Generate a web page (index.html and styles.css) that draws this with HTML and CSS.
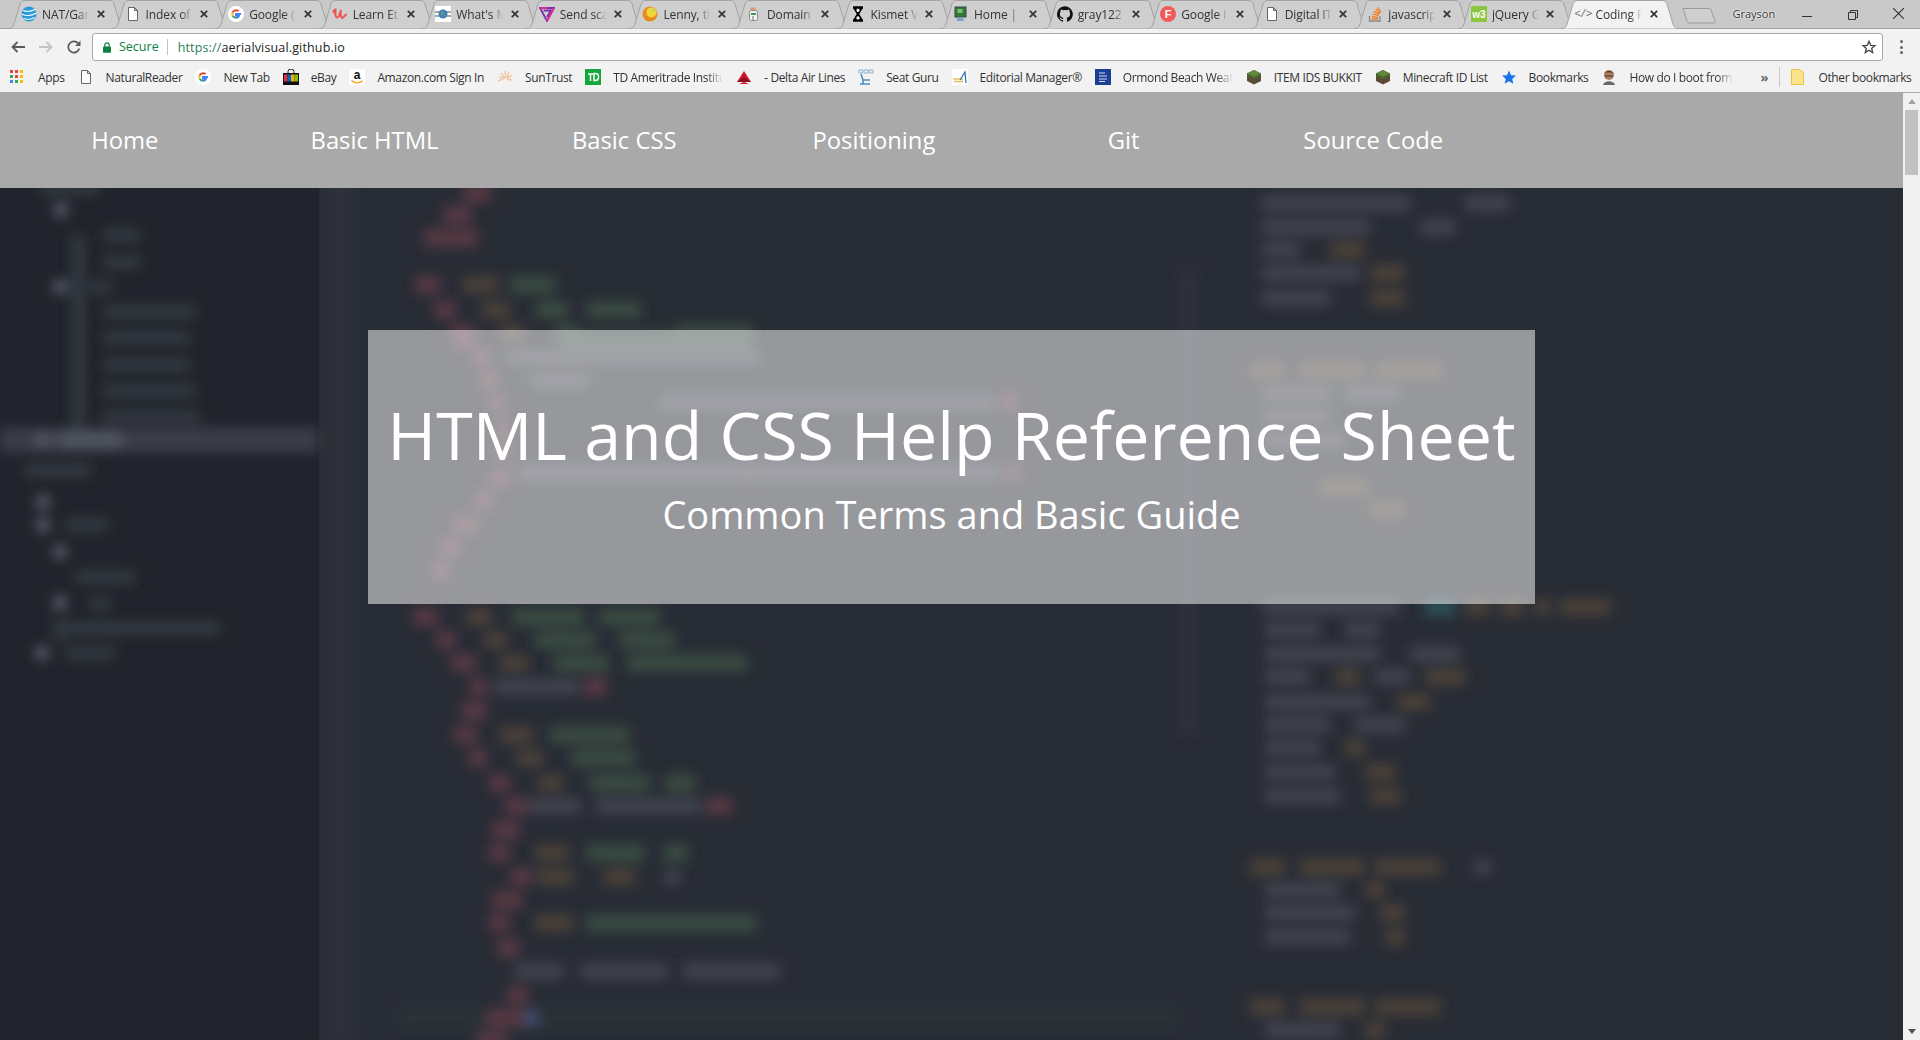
FILE: index.html
```html
<!DOCTYPE html>
<html lang="en">
<head>
<meta charset="utf-8">
<title>Coding Reference</title>
<link rel="stylesheet" href="styles.css">
</head>
<body>
<svg class="defs" width="0" height="0" aria-hidden="true">
  <defs>
    <symbol id="shape" viewBox="0 0 118 29"><path d="M0 28.5C4 28.5 5 27 6 24L12 4C13 1.5 14 .5 17 .5H101C104 .5 105 1.5 106 4L112 24C113 27 114 28.5 118 28.5"/></symbol>
    <symbol id="page" viewBox="0 0 16 16"><path d="M3.5 1.5H9.5L12.5 4.5V14.5H3.5Z M9.5 1.5V4.5H12.5" fill="#fff" stroke="#666" stroke-width="1"/></symbol>
    <symbol id="gee" viewBox="0 0 16 16"><circle cx="8" cy="8" r="8" fill="#fff"/><path d="M13 8H8V9.6H11C10.6 11 9.5 11.8 8 11.8" fill="none" stroke="#4285f4" stroke-width="2"/><path d="M8 11.8C6.5 11.8 5.2 11 4.6 9.7" fill="none" stroke="#34a853" stroke-width="2"/><path d="M4.6 9.7C4.2 8.7 4.2 7.4 4.6 6.3" fill="none" stroke="#fbbc05" stroke-width="2"/><path d="M4.6 6.3C5.2 5 6.5 4.2 8 4.2C9 4.2 9.9 4.5 10.6 5.1" fill="none" stroke="#ea4335" stroke-width="2"/></symbol>
    <symbol id="cube" viewBox="0 0 16 16"><path d="M8 1L15 4.5V12L8 15.5L1 12V4.5Z" fill="#5b4a35"/><path d="M8 1L15 4.5L8 8L1 4.5Z" fill="#5d8a3a"/><path d="M1 4.5L8 8V10L1 6.8Z M15 4.5L8 8V10L15 6.8Z" fill="#466b2c"/></symbol>
    <symbol id="x" viewBox="0 0 8 8"><path d="M.8.8L7.2 7.2M7.2.8L.8 7.2" stroke="#333" stroke-width="1.7" fill="none"/></symbol>
  </defs>
</svg>

<header class="chrome">
  <div class="tabstrip">
    <div class="tab"><svg class="shape"><use href="#shape"/></svg><svg class="ico" viewBox="0 0 16 16"><circle cx="8" cy="8" r="7.5" fill="#2a9bd6"/><path d="M2 4.6C6 6 10 5.6 14 3.6M.8 8.2C5 10 11 9.6 15.4 7M2.4 12.6C6 13.8 10 13.4 13.8 11.4" stroke="#fff" stroke-width="1.1" fill="none"/></svg><span class="ttl">NAT/Gar</span><svg class="cls"><use href="#x"/></svg></div>
    <div class="tab"><svg class="shape"><use href="#shape"/></svg><svg class="ico"><use href="#page"/></svg><span class="ttl">Index of</span><svg class="cls"><use href="#x"/></svg></div>
    <div class="tab"><svg class="shape"><use href="#shape"/></svg><svg class="ico"><use href="#gee"/></svg><span class="ttl">Google (</span><svg class="cls"><use href="#x"/></svg></div>
    <div class="tab"><svg class="shape"><use href="#shape"/></svg><svg class="ico" viewBox="0 0 16 16"><path d="M1 6C2 3 4 3 3.5 7C3 11 5 13 7 10L9 4C8 9 9 13 11 11.5L14.5 8M4 2.5L2 7.5" stroke="#ec5252" stroke-width="1.9" fill="none"/></svg><span class="ttl">Learn Et</span><svg class="cls"><use href="#x"/></svg></div>
    <div class="tab"><svg class="shape"><use href="#shape"/></svg><svg class="ico" viewBox="0 0 16 16"><rect width="16" height="16" fill="#fff"/><path d="M0 6H16M0 10H16" stroke="#9aa" stroke-width="2"/><circle cx="8" cy="8" r="4.5" fill="#3f7fbf"/><path d="M6 5.5L9 6L8 9L6 8.5ZM9 9L11 9L9.500 11.5Z" fill="#6aa84f"/></svg><span class="ttl">What's M</span><svg class="cls"><use href="#x"/></svg></div>
    <div class="tab"><svg class="shape"><use href="#shape"/></svg><svg class="ico" viewBox="0 0 16 16"><path d="M1 2H15L8 15ZM4.500 4.500H12L8 11" fill="none" stroke="#7a2bb0" stroke-width="1.8"/><path d="M1 2H8" stroke="#e0338c" stroke-width="1.8"/><path d="M15 2L8 15" stroke="#e0338c" stroke-width="1.8"/></svg><span class="ttl">Send sca</span><svg class="cls"><use href="#x"/></svg></div>
    <div class="tab"><svg class="shape"><use href="#shape"/></svg><svg class="ico" viewBox="0 0 16 16"><circle cx="8" cy="8" r="7.5" fill="#e58b1d"/><circle cx="9.400" cy="6.400" r="5" fill="#f6d53a"/><circle cx="11" cy="4.600" r="1.800" fill="#b6d96a"/></svg><span class="ttl">Lenny, th</span><svg class="cls"><use href="#x"/></svg></div>
    <div class="tab"><svg class="shape"><use href="#shape"/></svg><svg class="ico" viewBox="0 0 16 16"><path d="M4 1.500H10L9 4.500H5Z" fill="#d99a6c"/><rect x="3.500" y="4.500" width="8" height="10" rx="2" fill="#f2f2f2" stroke="#8a8a8a"/><path d="M5 8H10" stroke="#3a9a5a" stroke-width="2"/><path d="M7 10V14" stroke="#999" stroke-width="1.500"/></svg><span class="ttl">Domain</span><svg class="cls"><use href="#x"/></svg></div>
    <div class="tab"><svg class="shape"><use href="#shape"/></svg><svg class="ico" viewBox="0 0 16 16"><path d="M3 1.500H13M3 14.500H13M4.500 2L11.500 14M11.500 2L4.500 14" stroke="#000" stroke-width="2.400" fill="none"/><circle cx="8" cy="4.500" r="1.500" fill="#fff"/><circle cx="8" cy="11.800" r="1.600" fill="#fff"/></svg><span class="ttl">Kismet V</span><svg class="cls"><use href="#x"/></svg></div>
    <div class="tab"><svg class="shape"><use href="#shape"/></svg><svg class="ico" viewBox="0 0 16 16"><rect x="2" y="1" width="11" height="10" fill="#2f7a3a" stroke="#3a4a3a"/><rect x="4.500" y="3" width="5" height="4" fill="#7fbf6a"/><path d="M5 11L3.500 15H11L10 11" fill="#7fa0c0"/></svg><span class="ttl">Home | I</span><svg class="cls"><use href="#x"/></svg></div>
    <div class="tab"><svg class="shape"><use href="#shape"/></svg><svg class="ico" viewBox="0 0 16 16"><path fill="#111" d="M8 .2a8 8 0 0 0-2.500 15.600c.4.1.5-.2.5-.4v-1.400c-2.200.5-2.700-1-2.700-1-.4-.9-.9-1.200-.9-1.200-.7-.5.1-.5.1-.5.8.1 1.200.8 1.200.8.7 1.200 1.900.9 2.300.7.1-.5.3-.9.5-1.100-1.800-.2-3.600-.9-3.600-4 0-.9.3-1.600.8-2.100-.1-.2-.4-1 .1-2.100 0 0 .7-.2 2.200.8a7.600 7.600 0 0 1 4 0c1.500-1 2.200-.8 2.200-.8.4 1.100.2 1.900.1 2.100.5.6.8 1.300.8 2.100 0 3.100-1.900 3.700-3.700 3.900.3.300.6.800.6 1.500v2.200c0 .2.100.5.600.4A8 8 0 0 0 8 .2z"/></svg><span class="ttl">gray122</span><svg class="cls"><use href="#x"/></svg></div>
    <div class="tab"><svg class="shape"><use href="#shape"/></svg><svg class="ico" viewBox="0 0 16 16"><circle cx="8" cy="8" r="8" fill="#f25a5a"/><text x="8" y="12" class="ico-f">F</text></svg><span class="ttl">Google I</span><svg class="cls"><use href="#x"/></svg></div>
    <div class="tab"><svg class="shape"><use href="#shape"/></svg><svg class="ico"><use href="#page"/></svg><span class="ttl">Digital IT</span><svg class="cls"><use href="#x"/></svg></div>
    <div class="tab"><svg class="shape"><use href="#shape"/></svg><svg class="ico" viewBox="0 0 16 16"><path d="M2.500 10V15H13V10" fill="none" stroke="#8a8a8a" stroke-width="1.300"/><path d="M4.500 12.800H11M4.700 10.400L11 11.400M5.500 7.800L11.400 9.600M7 5.300L12.200 8.400M9 3L13 7.600M11 1.300L13.800 6.500" stroke="#f48024" stroke-width="1.400" fill="none"/></svg><span class="ttl">javascrip</span><svg class="cls"><use href="#x"/></svg></div>
    <div class="tab"><svg class="shape"><use href="#shape"/></svg><svg class="ico" viewBox="0 0 16 16"><rect width="16" height="16" fill="#8cc63f"/><text x="8" y="12" class="ico-w3">w3</text></svg><span class="ttl">jQuery G</span><svg class="cls"><use href="#x"/></svg></div>
    <div class="tab active"><svg class="shape"><use href="#shape"/></svg><span class="ico code">&lt;/&gt;</span><span class="ttl">Coding R</span><svg class="cls"><use href="#x"/></svg></div>
    <svg class="newtab" viewBox="0 0 34 17"><path d="M1 1.500H27C28 1.500 28.500 2 29 3L33 14C33.300 15.300 33 16 31.500 16H7C6 16 5.500 15.500 5 14.500Z" fill="#cfcfcf" stroke="#9a9a9a"/></svg>
    <div class="winctl">
      <span class="user">Grayson</span>
      <svg class="minbtn" viewBox="0 0 10 10"><path d="M0 5.500H10" stroke="#333"/></svg>
      <svg class="maxbtn" viewBox="0 0 10 10"><path d="M.5 2.500H7.500V9.500H.5ZM2.500 2.500V.5H9.500V7.500H7.500" fill="none" stroke="#333"/></svg>
      <svg class="closebtn" viewBox="0 0 10 10"><path d="M0 0L10 10M10 0L0 10" stroke="#333"/></svg>
    </div>
  </div>

  <div class="toolbar">
    <svg class="tool" viewBox="0 0 14 12"><path d="M14 6H2M6.500 1L1.500 6L6.500 11" fill="none" stroke="#5a5a5a" stroke-width="1.800"/></svg>
    <svg class="tool" viewBox="0 0 14 12"><path d="M0 6H12M7.500 1L12.500 6L7.500 11" fill="none" stroke="#c4c4c4" stroke-width="1.800"/></svg>
    <svg class="tool" viewBox="0 0 14 14"><path d="M12.300 8.500A5.600 5.600 0 1 1 11 3.200" fill="none" stroke="#5a5a5a" stroke-width="1.700"/><path d="M13.500 .5V6H8Z" fill="#5a5a5a"/></svg>
    <div class="omnibox">
      <svg class="lock" viewBox="0 0 9 12"><rect y="5" width="9" height="7" rx="1" fill="#0b8043"/><path d="M2 5.500V3.300A2.500 2.500 0 0 1 7 3.300V5.500" fill="none" stroke="#0b8043" stroke-width="1.300"/></svg>
      <span class="secure">Secure</span>
      <span class="url"><span class="scheme">https://</span>aerialvisual.github.io</span>
      <svg class="star" viewBox="0 0 14 14"><path d="M7 1.300L8.700 5.300L13 5.600L9.700 8.400L10.700 12.600L7 10.300L3.300 12.600L4.300 8.400L1 5.600L5.300 5.300Z" fill="none" stroke="#444" stroke-width="1.300"/></svg>
    </div>
    <div class="dots"><i></i><i></i><i></i></div>
  </div>

  <nav class="bookmarks">
    <a class="bm"><svg class="bi apps" viewBox="0 0 14 14"><path fill="#ea4335" d="M0 0h3v3H0z"/><path fill="#ea4335" d="M5 0h3v3H5z"/><path fill="#fbbc05" d="M10 0h3v3h-3z"/><path fill="#34a853" d="M0 5h3v3H0z"/><path fill="#ea4335" d="M5 5h3v3H5z"/><path fill="#fbbc05" d="M10 5h3v3h-3z"/><path fill="#4285f4" d="M0 10h3v3H0z"/><path fill="#34a853" d="M5 10h3v3H5z"/><path fill="#fbbc05" d="M10 10h3v3h-3z"/></svg><span>Apps</span></a>
    <a class="bm"><svg class="bi"><use href="#page"/></svg><span>NaturalReader</span></a>
    <a class="bm"><svg class="bi"><use href="#gee"/></svg><span>New Tab</span></a>
    <a class="bm"><svg class="bi" viewBox="0 0 16 16"><path d="M5 4V2.500A3 2.500 0 0 1 11 2.500V4" fill="none" stroke="#222"/><rect y="4" width="16" height="12" fill="#111"/><rect x="1" y="5.500" width="3.500" height="7" fill="#e53238"/><rect x="4.500" y="5.500" width="3.500" height="7" fill="#0064d2"/><rect x="8" y="5.500" width="3.500" height="7" fill="#f5af02"/><rect x="11.500" y="5.500" width="3.500" height="7" fill="#86b817"/></svg><span>eBay</span></a>
    <a class="bm"><svg class="bi" viewBox="0 0 16 16"><rect width="16" height="16" fill="#fff"/><text x="8" y="10" class="ico-a">a</text><path d="M2.500 11.500C6 14.500 10 14.500 13.500 11.800" fill="none" stroke="#f90" stroke-width="1.400"/></svg><span>Amazon.com Sign In</span></a>
    <a class="bm"><svg class="bi" viewBox="0 0 16 16"><path d="M1 12L8 9M2 8L8 9M4 4L8 9M8 2L9 9M12 3L10 9M15 6L10 10M15 11L10 10" stroke="#f2c9a8" stroke-width="1.500"/></svg><span>SunTrust</span></a>
    <a class="bm"><svg class="bi" viewBox="0 0 16 16"><rect width="16" height="16" fill="#14a83b"/><path d="M3 5H8M5.500 5V12M9 4.500V11.500H10.500A3 3.500 0 0 0 10.500 4.500Z" fill="none" stroke="#fff" stroke-width="1.500"/></svg><span class="fade">TD Ameritrade Institu</span></a>
    <a class="bm"><svg class="bi" viewBox="0 0 16 16"><path d="M8 2L15 13H1Z" fill="#d2132c"/><path d="M8 8L15 13H1Z" fill="#8f0f20"/><path d="M8 13L3 15H13Z" fill="#d2132c"/></svg><span>- Delta Air Lines</span></a>
    <a class="bm"><svg class="bi" viewBox="0 0 16 16"><path d="M1 1H5V4H1ZM6 1H10V4H6ZM11 1H15V4H11Z" fill="none" stroke="#8fb3d0"/><path d="M3 5L5 11H12M5 11V15M2 15H12" fill="none" stroke="#4d8fc4" stroke-width="1.600"/></svg><span>Seat Guru</span></a>
    <a class="bm"><svg class="bi" viewBox="0 0 16 16"><rect width="16" height="16" fill="#fff"/><path d="M1 10H11M2 12.500H11" stroke="#e4c25a" stroke-width="1.300"/><path d="M8 11L13 3L14 14" fill="none" stroke="#3577b4" stroke-width="1.300"/></svg><span>Editorial Manager®</span></a>
    <a class="bm"><svg class="bi" viewBox="0 0 16 16"><rect width="16" height="16" fill="#1c3f94"/><path d="M4 4H10M4 7H12M4 10H12M4 12.500H10" stroke="#d6def2"/></svg><span class="fade">Ormond Beach Weat</span></a>
    <a class="bm"><svg class="bi"><use href="#cube"/></svg><span>ITEM IDS BUKKIT</span></a>
    <a class="bm"><svg class="bi"><use href="#cube"/></svg><span>Minecraft ID List</span></a>
    <a class="bm"><svg class="bi" viewBox="0 0 16 16"><path d="M8 1.500L10 6.200L15 6.600L11.200 9.900L12.400 14.800L8 12.200L3.600 14.800L4.800 9.900L1 6.600L6 6.200Z" fill="#1a73e8"/></svg><span>Bookmarks</span></a>
    <a class="bm"><svg class="bi" viewBox="0 0 16 16"><circle cx="8" cy="6" r="5" fill="#b08060"/><path d="M3 5C4 1 12 1 13 5L11 3.500H5Z" fill="#5a4030"/><path d="M4 7H12" stroke="#333"/><path d="M2 16C3 11 13 11 14 16Z" fill="#6a6a6a"/></svg><span class="fade short">How do I boot from</span></a>
    <span class="more">»</span>
    <i class="bm-sep"></i>
    <a class="bm last"><svg class="bi folder" viewBox="0 0 13 16"><path d="M.5 .5H8.500L12.500 3.500V15.500H.5Z" fill="#fbe38e" stroke="#e9c13c"/></svg><span>Other bookmarks</span></a>
  </nav>
</header>

<div class="viewport">
  <main class="page">
    <nav class="sitenav">
      <a>Home</a><a>Basic HTML</a><a>Basic CSS</a><a>Positioning</a><a>Git</a><a>Source Code</a>
    </nav>
    <section class="hero">
      <svg class="codebg" viewBox="0 188 1903 852" aria-hidden="true">
        <defs><filter id="blur" x="-5%" y="-5%" width="110%" height="110%"><feGaussianBlur stdDeviation="6"/></filter></defs>
        <rect x="0" y="188" width="1903" height="852" fill="#282c35"/>
        <rect x="0" y="188" width="319" height="852" fill="#21242c"/>
        <g filter="url(#blur)" fill="none">
          <path d="M340 170V1040" stroke="#2e323a" stroke-width="24"/>
          <path d="M1188 270V735" stroke="#2f333c" stroke-width="14"/>
          <path d="M400 1018H1175" stroke="#2c3039" stroke-width="22"/>
          <path d="M0 440H318" stroke="#3a3e48" stroke-width="24"/>
          <g stroke="#333741" stroke-width="14">
            <path d="M40 188H100M103 235H140M103 262H140M90 287H112M103 312H195M103 338H190M103 365H190M103 391H195M103 417H200M78 235V430M25 470H90M65 525H108M75 577H135M90 603H110M60 628H220M65 653H115M60 620V640"/>
          </g>
          <g stroke="#50545f" stroke-width="16" stroke-linecap="round">
            <path d="M61 210h.1M60 287h.1M42 440h.1M65 440H115M43 502h.1M43 525h.1M60 552h.1M60 603h.1M42 653h.1"/>
          </g>
          <g stroke="#553743" stroke-width="18">
            <path d="M463 193H491M443 215H472M424 238H478M415 285H440M434 310H456M450 333H475M457 340H472M472 357H490M480 380H498M490 404H505M495 430H510M495 452H510M490 478H510M475 500H492M454 525H478M440 547H460M431 570H450M413 617H438M436 640H456M451 663H476M469 687H487M584 687H607M461 711H487M454 735H477M469 758H487M489 783H510M505 806H528M706 806H732M492 830H520M489 853H510M510 877H533M492 900H522M489 923H510M497 948H520M507 995H528M487 1018H525M477 1040H507M1002 402H1018M1006 473H1020M741 473H756"/>
          </g>
          <g stroke="#4a4139" stroke-width="17">
            <path d="M463 285H498M482 310H510M500 333H525M466 617H492M484 640H507M500 663H528M500 735H533M517 758H543M538 783H563M535 853H568M538 877H573M604 877H635M535 923H573M1250 370H1285M1300 370H1365M1375 370H1443M1320 487H1370M1370 510H1405M1330 250H1365M1370 273H1405M1370 298H1405M1465 607H1490M1500 607H1525M1535 607H1550M1560 607H1610M1335 677H1360M1425 677H1465M1398 702H1430M1345 748H1365M1365 772H1395M1370 796H1400M1250 867H1285M1300 867H1365M1375 867H1440M1365 890H1385M1380 913H1405M1385 937H1405M1250 1007H1285M1300 1007H1365M1375 1007H1440M1365 1030H1385"/>
          </g>
          <g stroke="#394a40" stroke-width="18">
            <path d="M510 285H555M536 310H568M587 310H641M555 333H580M676 333H753M562 340H750M512 617H584M599 617H660M535 640H596M619 640H675M553 663H609M627 663H747M550 735H630M571 758H635M589 783H650M665 783H696M586 853H645M663 853H688M586 923H757"/>
          </g>
          <g stroke="#3f434d" stroke-width="16">
            <path d="M505 357H760M660 402H995M517 473H1000M530 380H590M494 687H579M530 806H581M596 806H701M665 877H680M515 971H563M581 971H668M683 971H780M1262 203H1410M1465 203H1510M1262 227H1370M1420 227H1455M1262 250H1300M1262 273H1360M1262 298H1330M1262 393H1330M1345 393H1400M1262 416H1330M1262 440H1345M1262 607H1400M1265 630H1320M1345 630H1380M1265 654H1380M1410 654H1460M1265 677H1310M1375 677H1410M1265 702H1370M1265 725H1330M1355 725H1405M1265 748H1320M1265 772H1335M1265 796H1340M1265 890H1340M1265 913H1355M1265 937H1350M1265 1030H1340M1475 867H1490"/>
          </g>
          <path d="M1425 607H1455" stroke="#2c5058" stroke-width="18"/>
          <path d="M525 1018H538" stroke="#3d4c6a" stroke-width="17"/>
          <path d="M1243 505H1243.100M1243 925H1243.100M1243 1085H1243.100" stroke="#363a42" stroke-width="14"/>
        </g>
      </svg>
      <div class="banner">
        <h1>HTML and CSS Help Reference Sheet</h1>
        <h2>Common Terms and Basic Guide</h2>
      </div>
    </section>
  </main>
  <aside class="scrollbar">
    <svg class="arrow" viewBox="0 0 8 5"><path d="M4 0L8 5H0Z"/></svg>
    <div class="thumb"></div>
    <svg class="arrow down" viewBox="0 0 8 5"><path d="M0 0H8L4 5Z"/></svg>
  </aside>
</div>
</body>
</html>
```

FILE: styles.css
```css
* { box-sizing: border-box; }
html, body { margin: 0; height: 100%; overflow: hidden; }
body {
  display: flex;
  flex-direction: column;
  font-family: "Open Sans", "Noto Sans", sans-serif;
  background: #282c35;
}
.defs { display: block; height: 0; }

/* browser chrome */
.chrome { flex: none; background: #f2f2f2; color: #333; font-size: 12px; }
.tabstrip {
  display: flex;
  height: 29px;
  padding-left: 8px;
  background: #c9c9c9;
  border-bottom: 1px solid #a3a3a3;
}
.tab {
  position: relative;
  flex: 0 0 118px;
  height: 28px;
  margin-right: -14.45px;
  display: flex;
  align-items: center;
  padding-left: 13px;
}
.shape {
  position: absolute;
  left: 0;
  top: 0;
  width: 118px;
  height: 29px;
  fill: #cfcfcf;
  stroke: #a3a3a3;
}
.tab.active { z-index: 2; }
.tab.active .shape { fill: #f2f2f2; }
.ico { position: relative; flex: none; width: 16px; height: 16px; }
.ico.code { color: #777; font-size: 11px; line-height: 16px; font-family: "Liberation Mono", monospace; letter-spacing: -1px; white-space: nowrap; }
.ico-f { font: bold 11px "Liberation Sans", sans-serif; fill: #fff; text-anchor: middle; }
.ico-w3 { font: bold 10px "Liberation Sans", sans-serif; fill: #fff; text-anchor: middle; }
.ico-a { font: bold 12px "Liberation Sans", sans-serif; fill: #111; text-anchor: middle; }
.ttl {
  position: relative;
  flex: none;
  width: 47px;
  margin-left: 5px;
  white-space: nowrap;
  letter-spacing: -.1px;
  -webkit-mask-image: linear-gradient(90deg, #000 75%, transparent 100%);
  mask-image: linear-gradient(90deg, #000 75%, transparent 100%);
}
.cls { position: relative; flex: none; width: 8px; height: 8px; margin-left: 7.5px; }
.newtab { flex: none; width: 34px; height: 17px; margin: 7px 0 0 16.5px; }
.winctl { display: flex; flex: 1; align-items: flex-start; padding-top: 8px; }
.user {
  margin-left: 17px;
  width: 42px;
  font-size: 11px;
  line-height: 12px;
  color: #333;
  text-shadow: 0 0 2px #fff, 0 0 2px #fff;
  white-space: nowrap;
}
.minbtn, .maxbtn, .closebtn { flex: none; width: 10px; height: 10px; }
.minbtn { margin: 3px 0 0 27px; }
.maxbtn { margin: 2px 0 0 36px; }
.closebtn { margin: 0 0 0 35px; width: 11px; height: 11px; }

.toolbar {
  display: flex;
  align-items: center;
  height: 32px;
  padding: 4px 0 0 11px;
}
.tool { flex: none; width: 14px; height: 14px; margin-right: 14px; }
.omnibox {
  flex: none;
  width: 1791px;
  height: 28px;
  margin-left: -3px;
  display: flex;
  align-items: center;
  padding: 0 6px 0 10px;
  background: #fff;
  border: 1px solid #a9a9a9;
  border-radius: 3px;
  font-size: 12.5px;
}
.lock { flex: none; width: 8px; height: 11px; }
.secure { color: #0b8043; margin-left: 8px; padding-right: 8px; border-right: 1px solid #c4c4c4; line-height: 16px; }
.url { margin-left: 10px; flex: 1; color: #222; letter-spacing: .15px; }
.scheme { color: #2f7d5b; }
.star { flex: none; width: 14px; height: 14px; }
.dots { display: flex; flex-direction: column; gap: 2.5px; margin-left: 17px; }
.dots i { display: block; width: 3px; height: 3px; background: #666; border-radius: 50%; }

.bookmarks {
  display: flex;
  align-items: center;
  height: 32px;
  padding: 1px 0 0 10px;
  border-bottom: 1px solid #a9a9a9;
  white-space: nowrap;
}
.bm { display: flex; align-items: center; flex: none; margin-right: 13px; letter-spacing: -.37px; }
.bm.last { margin-right: 0; }
.bi { flex: none; width: 16px; height: 16px; margin-right: 12px; }
.bi.apps { width: 14px; height: 14px; margin-right: 14px; }
.bi.folder { width: 13px; margin-right: 14px; }
.fade { -webkit-mask-image: linear-gradient(90deg, #000 85%, transparent 100%); mask-image: linear-gradient(90deg, #000 85%, transparent 100%); width: 110px; }
.fade.short { width: 104px; }
.more { color: #666; margin: 0 11px 0 14px; font-size: 13px; font-weight: 700; }
.bm-sep { display: block; width: 1px; height: 20px; background: #c8c8c8; margin-right: 11px; }

/* page */
.viewport { flex: 1; min-height: 0; display: flex; }
.page { flex: 1; min-width: 0; display: flex; flex-direction: column; }
.sitenav {
  flex: none;
  height: 95px;
  padding-bottom: 2px;
  display: grid;
  grid-template-columns: repeat(6, 249.7px);
  align-items: center;
  background: #a9a9a9;
  color: #fff;
  font-size: 23.8px;
  text-align: center;
}
.hero {
  flex: 1;
  min-height: 0;
  overflow: hidden;
  display: grid;
  justify-items: center;
  align-items: start;
}
.codebg { grid-area: 1 / 1; width: 1903px; height: 852px; display: block; }
.banner {
  grid-area: 1 / 1;
  z-index: 1;
  width: 1167px;
  height: 274px;
  margin-top: 142px;
  padding-top: 60px;
  background: rgba(255, 255, 255, .515);
  color: #fff;
  text-align: center;
}
h1 { margin: 0 0 10px; font-size: 66.3px; font-weight: 400; line-height: 88px; white-space: nowrap; }
h2 { margin: 0; font-size: 38px; font-weight: 400; line-height: 52px; }

/* scrollbar */
.scrollbar {
  flex: none;
  width: 17px;
  background: #f1f1f1;
  display: flex;
  flex-direction: column;
  align-items: center;
  padding-top: 6px;
}
.arrow { flex: none; width: 8px; height: 5px; fill: #a3a3a3; }
.arrow.down { margin-top: auto; margin-bottom: 6px; fill: #505050; }
.thumb { flex: none; width: 13px; height: 65px; margin-top: 6px; background: #c1c1c1; }
```
